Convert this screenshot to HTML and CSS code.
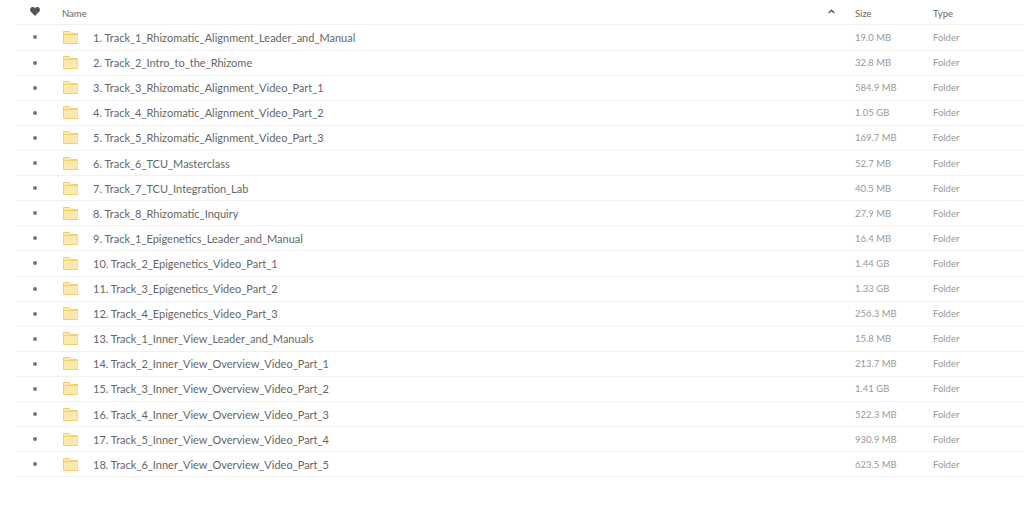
FILE: index.html
```html
<!DOCTYPE html>
<html lang="en">
<head>
    <meta charset="UTF-8">
    <title>Folder list</title>
    <link rel="stylesheet" href="styles.css">
</head>
<body>
    <svg class="defs" width="0" height="0">
        <symbol id="folder" viewBox="0 0 15 13">
            <path d="M.5 12.5V.5h6l1.500 2h7v10z" fill="#fbe9ae" stroke="#f5cf6b"/>
            <path d="M.5 3.500h14" fill="none" stroke="#f5cf6b"/>
        </symbol>
    </svg>
    <div class="file-list">
        <div class="row head">
            <div class="col-fav">
                <svg class="heart" viewBox="0 0 10 9"><path d="M5 9 .8 4.700C-.6 3.200 0 .4 2.400.1 3.500 0 4.400.5 5 1.400 5.600.5 6.500 0 7.600.1 10 .4 10.600 3.200 9.200 4.700z"/></svg>
            </div>
            <div class="col-name">Name</div>
            <svg class="sort" viewBox="0 0 7 5"><path d="M.7 4 3.500 1.200 6.300 4" fill="none" stroke="#555" stroke-width="1.300"/></svg>
            <div class="col-size">Size</div>
            <div class="col-type">Type</div>
        </div>
        <div class="row"><div class="col-fav"><span class="dot"></span></div><svg class="folder"><use href="#folder"/></svg><div class="col-title">1. Track_1_Rhizomatic_Alignment_Leader_and_Manual</div><div class="col-size">19.0 MB</div><div class="col-type">Folder</div></div>
        <div class="row"><div class="col-fav"><span class="dot"></span></div><svg class="folder"><use href="#folder"/></svg><div class="col-title">2. Track_2_Intro_to_the_Rhizome</div><div class="col-size">32.8 MB</div><div class="col-type">Folder</div></div>
        <div class="row"><div class="col-fav"><span class="dot"></span></div><svg class="folder"><use href="#folder"/></svg><div class="col-title">3. Track_3_Rhizomatic_Alignment_Video_Part_1</div><div class="col-size">584.9 MB</div><div class="col-type">Folder</div></div>
        <div class="row"><div class="col-fav"><span class="dot"></span></div><svg class="folder"><use href="#folder"/></svg><div class="col-title">4. Track_4_Rhizomatic_Alignment_Video_Part_2</div><div class="col-size">1.05 GB</div><div class="col-type">Folder</div></div>
        <div class="row"><div class="col-fav"><span class="dot"></span></div><svg class="folder"><use href="#folder"/></svg><div class="col-title">5. Track_5_Rhizomatic_Alignment_Video_Part_3</div><div class="col-size">169.7 MB</div><div class="col-type">Folder</div></div>
        <div class="row"><div class="col-fav"><span class="dot"></span></div><svg class="folder"><use href="#folder"/></svg><div class="col-title">6. Track_6_TCU_Masterclass</div><div class="col-size">52.7 MB</div><div class="col-type">Folder</div></div>
        <div class="row"><div class="col-fav"><span class="dot"></span></div><svg class="folder"><use href="#folder"/></svg><div class="col-title">7. Track_7_TCU_Integration_Lab</div><div class="col-size">40.5 MB</div><div class="col-type">Folder</div></div>
        <div class="row"><div class="col-fav"><span class="dot"></span></div><svg class="folder"><use href="#folder"/></svg><div class="col-title">8. Track_8_Rhizomatic_Inquiry</div><div class="col-size">27.9 MB</div><div class="col-type">Folder</div></div>
        <div class="row"><div class="col-fav"><span class="dot"></span></div><svg class="folder"><use href="#folder"/></svg><div class="col-title">9. Track_1_Epigenetics_Leader_and_Manual</div><div class="col-size">16.4 MB</div><div class="col-type">Folder</div></div>
        <div class="row"><div class="col-fav"><span class="dot"></span></div><svg class="folder"><use href="#folder"/></svg><div class="col-title">10. Track_2_Epigenetics_Video_Part_1</div><div class="col-size">1.44 GB</div><div class="col-type">Folder</div></div>
        <div class="row"><div class="col-fav"><span class="dot"></span></div><svg class="folder"><use href="#folder"/></svg><div class="col-title">11. Track_3_Epigenetics_Video_Part_2</div><div class="col-size">1.33 GB</div><div class="col-type">Folder</div></div>
        <div class="row"><div class="col-fav"><span class="dot"></span></div><svg class="folder"><use href="#folder"/></svg><div class="col-title">12. Track_4_Epigenetics_Video_Part_3</div><div class="col-size">256.3 MB</div><div class="col-type">Folder</div></div>
        <div class="row"><div class="col-fav"><span class="dot"></span></div><svg class="folder"><use href="#folder"/></svg><div class="col-title">13. Track_1_Inner_View_Leader_and_Manuals</div><div class="col-size">15.8 MB</div><div class="col-type">Folder</div></div>
        <div class="row"><div class="col-fav"><span class="dot"></span></div><svg class="folder"><use href="#folder"/></svg><div class="col-title">14. Track_2_Inner_View_Overview_Video_Part_1</div><div class="col-size">213.7 MB</div><div class="col-type">Folder</div></div>
        <div class="row"><div class="col-fav"><span class="dot"></span></div><svg class="folder"><use href="#folder"/></svg><div class="col-title">15. Track_3_Inner_View_Overview_Video_Part_2</div><div class="col-size">1.41 GB</div><div class="col-type">Folder</div></div>
        <div class="row"><div class="col-fav"><span class="dot"></span></div><svg class="folder"><use href="#folder"/></svg><div class="col-title">16. Track_4_Inner_View_Overview_Video_Part_3</div><div class="col-size">522.3 MB</div><div class="col-type">Folder</div></div>
        <div class="row"><div class="col-fav"><span class="dot"></span></div><svg class="folder"><use href="#folder"/></svg><div class="col-title">17. Track_5_Inner_View_Overview_Video_Part_4</div><div class="col-size">930.9 MB</div><div class="col-type">Folder</div></div>
        <div class="row"><div class="col-fav"><span class="dot"></span></div><svg class="folder"><use href="#folder"/></svg><div class="col-title">18. Track_6_Inner_View_Overview_Video_Part_5</div><div class="col-size">623.5 MB</div><div class="col-type">Folder</div></div>
    </div>
</body>
</html>
```

FILE: styles.css
```css
html, body {
    height: 100%;
}
body {
    margin: 0;
    overflow: hidden;
    background: white;
    font-family: Lato, "Open Sans", sans-serif;
    font-size: 11px;
    color: #999;
}
.defs {
    display: block;
    height: 0;
}
.file-list {
    padding-left: 17px;
    padding-top: .3px;
}
.row {
    display: flex;
    align-items: center;
    height: 25.12px;
    box-sizing: border-box;
    border-bottom: 1px solid #f0f0f0;
}
.head {
    padding-top: 2px;
}
.col-fav {
    width: 36px;
    flex: none;
    display: flex;
    justify-content: center;
}
.dot {
    width: 4px;
    height: 4px;
    border-radius: 50%;
    background: #777;
}
.heart {
    width: 10px;
    height: 9px;
    margin-top: -4px;
    fill: #555;
}
.folder {
    width: 15px;
    height: 13px;
    margin-left: 10px;
    flex: none;
}
.col-title {
    margin-left: 15px;
    flex: 1;
    font-size: 11px;
    color: #666;
}
.col-name {
    margin-left: 9px;
    flex: 1;
    color: #666;
    font-size: 9.500px;
}
.sort {
    width: 7px;
    height: 5px;
    margin-right: 20px;
    margin-top: -3px;
}
.col-size {
    width: 78px;
    flex: none;
    box-sizing: border-box;
    font-size: 9.500px;
}
.col-type {
    width: 91px;
    flex: none;
    font-size: 9.500px;
}
.head .col-size, .head .col-type {
    color: #666;
}
```
